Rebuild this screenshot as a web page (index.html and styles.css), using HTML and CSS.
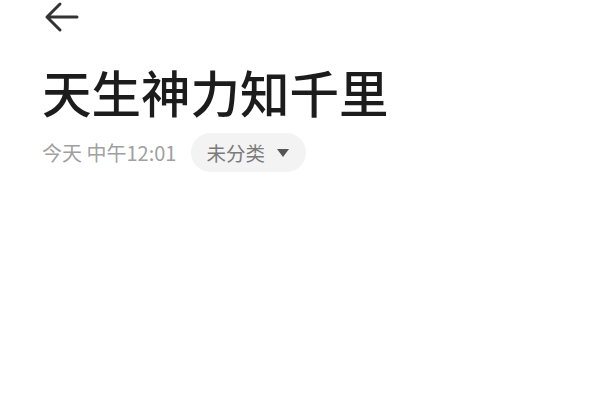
FILE: index.html
```html
<!DOCTYPE html>
<html lang="zh">
<head>
<meta charset="utf-8">
<link rel="stylesheet" href="styles.css">
</head>
<body>
<div class="page">
  <div class="topbar">
    <svg class="back" width="36" height="32" viewBox="0 0 36 32">
      <path d="M34 16 H4 M17 3 L4 16 L17 29" fill="none" stroke="#333" stroke-width="3" stroke-linecap="round" stroke-linejoin="round"/>
    </svg>
  </div>
  <h1 class="title">天生神力知千里</h1>
  <div class="meta">
    <span class="date">今天 中午12:01</span>
    <span class="pill">未分类<span class="tri"></span></span>
  </div>
</div>
</body>
</html>
```
FILE: styles.css
```css
html, body {
  margin: 0;
  padding: 0;
  background: #fff;
}
body {
  font-family: "Noto Sans CJK SC", "Noto Sans", sans-serif;
  width: 600px;
  height: 400px;
  overflow: hidden;
}
.page {
  padding: 0 0 0 42px;
}
.topbar {
  height: 34px;
  display: flex;
  align-items: flex-start;
  padding-top: 1px;
}
.back {
  display: block;
  margin-left: 1px;
}
.title {
  margin: 22px 0 0 0;
  font-size: 49.5px;
  font-weight: 500;
  line-height: 70px;
  color: #1c1c1c;
}
.meta {
  display: flex;
  align-items: center;
  margin-top: 6px;
}
.date {
  font-size: 20px;
  color: #a0a0a0;
}
.pill {
  margin-left: 15px;
  height: 39px;
  padding: 0 17px 0 15px;
  border-radius: 20px;
  background: #f3f3f3;
  display: flex;
  align-items: center;
  font-size: 19.5px;
  color: #7a7a7a;
}
.tri {
  width: 0;
  height: 0;
  border-left: 6px solid transparent;
  border-right: 6px solid transparent;
  border-top: 8px solid #555;
  margin-left: 12px;
}
```
